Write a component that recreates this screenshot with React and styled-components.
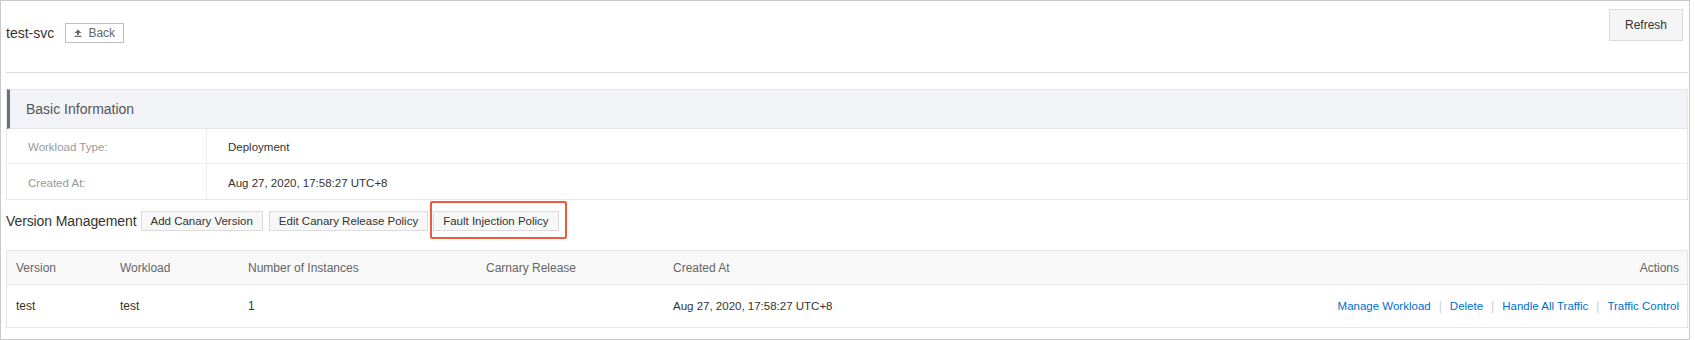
import React from 'react';
import styled, { createGlobalStyle } from 'styled-components';

const GlobalStyle = createGlobalStyle`
  body {
    margin: 0;
    background: #fff;
    font-family: "Liberation Sans", Arial, sans-serif;
    color: #333;
  }
`;

const Frame = styled.div`
  width: 1690px;
  height: 340px;
  box-sizing: border-box;
  border: 1px solid #c9c9c9;
  padding: 0 1px 0 5px;
`;

const Header = styled.div`
  height: 72px;
  box-sizing: border-box;
  padding-top: 8px;
  display: flex;
  justify-content: space-between;
  align-items: flex-start;
  border-bottom: 1px solid #dcdcdc;
`;

const TitleGroup = styled.div`
  display: flex;
  align-items: center;
  gap: 11px;
  margin-top: 14px;
  height: 20px;
`;

const Title = styled.span`
  font-size: 14px;
  color: #333;
`;

const BackButton = styled.button`
  height: 20px;
  width: 59px;
  box-sizing: border-box;
  display: flex;
  align-items: center;
  justify-content: center;
  gap: 6px;
  padding: 0;
  background: #fff;
  border: 1px solid #bdbdbd;
  color: #666;
  font-family: inherit;
  font-size: 12px;
`;

const RefreshButton = styled.button`
  width: 74px;
  height: 32px;
  margin-right: 5px;
  background: #f5f5f5;
  border: 1px solid #dcdcdc;
  color: #333;
  font-family: inherit;
  font-size: 12px;
`;

const InfoBox = styled.div`
  margin-top: 16px;
  border: 1px solid #e6e8ec;
  border-top: none;
`;

const InfoHead = styled.div`
  height: 40px;
  box-sizing: border-box;
  display: flex;
  align-items: center;
  padding-left: 16px;
  background: #f2f3f7;
  border-top: 1px solid #e3e5ea;
  border-left: 3px solid #6e6f80;
  border-bottom: 1px solid #e3e5ea;
  font-size: 14px;
  color: #555;
`;

const InfoRow = styled.div`
  display: grid;
  grid-template-columns: 200px 1fr;
  height: 35px;
  box-sizing: border-box;
  border-bottom: ${p => (p.last ? 'none' : '1px solid #eceef1')};
  font-size: 11.5px;
`;

const InfoCell = styled.div`
  display: flex;
  align-items: center;
  padding-left: 21px;
  padding-top: 2px;
  color: ${p => (p.label ? '#999' : '#333')};
  border-right: ${p => (p.label ? '1px solid #eceef1' : 'none')};
`;

const VersionBar = styled.div`
  margin-top: 11px;
  height: 20px;
  display: flex;
  align-items: center;
`;

const SectionLabel = styled.span`
  font-size: 14px;
  color: #333;
  margin-right: 4px;
  letter-spacing: -0.1px;
`;

const ActionButton = styled.button`
  height: 20px;
  box-sizing: border-box;
  padding: 0 9px;
  margin-left: ${p => p.gap || 0}px;
  background: #f7f7f7;
  border: 1px solid #dcdcdc;
  color: #333;
  font-family: inherit;
  font-size: 11.5px;
  white-space: nowrap;
`;

const Highlight = styled.span`
  position: relative;
  display: inline-flex;
  margin-left: 5px;

  &::after {
    content: '';
    position: absolute;
    top: -10px;
    left: -3px;
    right: -8px;
    bottom: -8px;
    border: 2px solid #ee5a3b;
    border-radius: 2px;
    pointer-events: none;
  }
`;

const Table = styled.div`
  margin-top: 19px;
  border: 1px solid #e3e6eb;
  font-size: 12px;
`;

const Row = styled.div`
  display: grid;
  grid-template-columns: 104px 128px 238px 187px 1fr auto;
  height: ${p => (p.head ? 33 : 42)}px;
  background: ${p => (p.head ? '#f8f8f8' : '#fff')};
  border-bottom: ${p => (p.head ? '1px solid #e3e6eb' : 'none')};
  color: ${p => (p.head ? '#666' : '#333')};
`;

const Cell = styled.div`
  display: flex;
  align-items: center;
  padding-left: 9px;
  justify-content: ${p => (p.right ? 'flex-end' : 'flex-start')};
  padding-right: ${p => (p.right ? 8 : 0)}px;
  white-space: nowrap;
  font-size: ${p => (p.small ? '11.5px' : 'inherit')};
`;

const Link = styled.a`
  color: #0070cc;
  text-decoration: none;
  cursor: pointer;
  font-size: 11.5px;
`;

const Sep = styled.span`
  color: #ccc;
  margin: 0 8px;
`;

const BackIcon = () => (
  <svg width="8" height="8" viewBox="0 0 8 8">
    <path d="M4 0.5 L7.5 4 L5 4 L5 6 L3 6 L3 4 L0.5 4 Z" fill="#666" />
    <rect x="0.5" y="6.8" width="7" height="1.2" fill="#666" />
  </svg>
);

const actions = ['Manage Workload', 'Delete', 'Handle All Traffic', 'Traffic Control'];

export default function App() {
  return (
    <>
      <GlobalStyle />
      <Frame>
        <Header>
          <TitleGroup>
            <Title>test-svc</Title>
            <BackButton>
              <BackIcon />
              Back
            </BackButton>
          </TitleGroup>
          <RefreshButton>Refresh</RefreshButton>
        </Header>

        <InfoBox>
          <InfoHead>Basic Information</InfoHead>
          <InfoRow>
            <InfoCell label>Workload Type:</InfoCell>
            <InfoCell>Deployment</InfoCell>
          </InfoRow>
          <InfoRow last>
            <InfoCell label>Created At:</InfoCell>
            <InfoCell>Aug 27, 2020, 17:58:27 UTC+8</InfoCell>
          </InfoRow>
        </InfoBox>

        <VersionBar>
          <SectionLabel>Version Management</SectionLabel>
          <ActionButton>Add Canary Version</ActionButton>
          <ActionButton gap={6}>Edit Canary Release Policy</ActionButton>
          <Highlight>
            <ActionButton>Fault Injection Policy</ActionButton>
          </Highlight>
        </VersionBar>

        <Table>
          <Row head>
            <Cell>Version</Cell>
            <Cell>Workload</Cell>
            <Cell>Number of Instances</Cell>
            <Cell>Carnary Release</Cell>
            <Cell>Created At</Cell>
            <Cell right>Actions</Cell>
          </Row>
          <Row>
            <Cell>test</Cell>
            <Cell>test</Cell>
            <Cell>1</Cell>
            <Cell></Cell>
            <Cell small>Aug 27, 2020, 17:58:27 UTC+8</Cell>
            <Cell right>
              {actions.map((a, i) => (
                <React.Fragment key={a}>
                  {i > 0 && <Sep>|</Sep>}
                  <Link>{a}</Link>
                </React.Fragment>
              ))}
            </Cell>
          </Row>
        </Table>
      </Frame>
    </>
  );
}
